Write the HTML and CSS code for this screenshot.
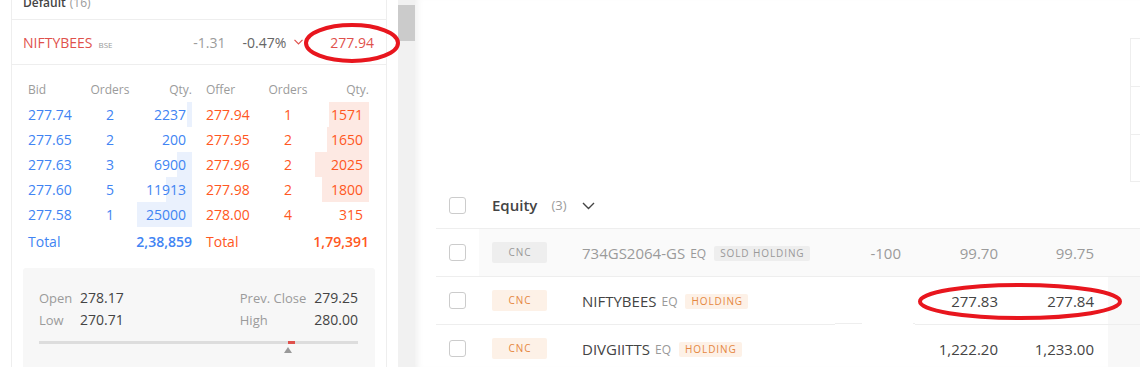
FILE: index.html
```html
<!DOCTYPE html>
<html lang="en">
<head>
<meta charset="utf-8">
<title>Kite</title>
<link rel="stylesheet" href="styles.css">
</head>
<body>
<div class="app">
  <aside class="sidebar">
    <div class="panel">
      <div class="wl-head"><span class="wl-name">Default</span><span class="wl-count">(16)</span></div>
      <div class="inst">
        <span class="inst-name">NIFTYBEES</span><span class="exch">BSE</span>
        <span class="chg">-1.31</span>
        <span class="pct">-0.47%</span>
        <svg class="down" width="9" height="6" viewBox="0 0 9 6"><path d="M0.5 0.8 L4.5 5 L8.5 0.8" fill="none" stroke="#df514c" stroke-width="1.2"/></svg>
        <span class="ltp">277.94</span>
      </div>
      <div class="depth">
        <div class="dh">Bid</div><div class="dh c">Orders</div><div class="dh r">Qty.</div>
        <div class="dh off">Offer</div><div class="dh c">Orders</div><div class="dh r">Qty.</div>

        <div class="b">277.74</div><div class="b c">2</div><div class="b q bq" style="--w:5px">2237</div>
        <div class="a off">277.94</div><div class="a c">1</div><div class="a q aq" style="--w:40px">1571</div>

        <div class="b">277.65</div><div class="b c">2</div><div class="b q bq" style="--w:0px">200</div>
        <div class="a off">277.95</div><div class="a c">2</div><div class="a q aq" style="--w:42px">1650</div>

        <div class="b">277.63</div><div class="b c">3</div><div class="b q bq" style="--w:15px">6900</div>
        <div class="a off">277.96</div><div class="a c">2</div><div class="a q aq" style="--w:54px">2025</div>

        <div class="b">277.60</div><div class="b c">5</div><div class="b q bq" style="--w:26px">11913</div>
        <div class="a off">277.98</div><div class="a c">2</div><div class="a q aq" style="--w:47px">1800</div>

        <div class="b">277.58</div><div class="b c">1</div><div class="b q bq" style="--w:55px">25000</div>
        <div class="a off">278.00</div><div class="a c">4</div><div class="a q aq" style="--w:0px">315</div>

        <div class="b tot">Total</div><div class="b tot"></div><div class="b tot r strong">2,38,859</div>
        <div class="a tot off">Total</div><div class="a tot"></div><div class="a tot r strong">1,79,391</div>
      </div>
      <div class="ohlc">
        <div class="ohlc-grid">
          <div class="og-left">
            <span class="lbl">Open</span><span class="val">278.17</span>
            <span class="lbl">Low</span><span class="val">270.71</span>
          </div>
          <div class="og-right">
            <span class="lbl">Prev. Close</span><span class="val">279.25</span>
            <span class="lbl">High</span><span class="val">280.00</span>
          </div>
        </div>
        <div class="range"><div class="range-mark" style="--p:249px"></div></div>
        <div class="range-ptr" style="--p:245px"></div>
      </div>
    </div>
  </aside>

  <div class="scrollbar"><div class="thumb"></div></div>

  <main class="main">
    <div class="top">
      <div class="edge-table">
        <div class="edge-row"></div>
        <div class="edge-row"></div>
        <div class="edge-row last"></div>
      </div>
    </div>

    <div class="group-head">
      <div class="cell cb-cell"><span class="cb"></span></div>
      <div class="g-title">Equity</div>
      <div class="g-count">(3)</div>
      <svg class="g-chev" width="13" height="8" viewBox="0 0 13 8"><path d="M1 1 L6.5 6.5 L12 1" fill="none" stroke="#444" stroke-width="1.4"/></svg>
    </div>

    <div class="row sold">
      <div class="cell cb-cell"><span class="cb"></span></div>
      <div class="cell prod"><span class="tag tag-gray">CNC</span></div>
      <div class="cell instr"><span class="sym">734GS2064-GS</span><span class="seg">EQ</span><span class="badge badge-gray">SOLD HOLDING</span></div>
      <div class="cell num qty">-100</div>
      <div class="cell num avg">99.70</div>
      <div class="cell num ltpc">99.75</div>
      <div class="cell tail"></div>
    </div>

    <div class="row">
      <div class="cell cb-cell"><span class="cb"></span></div>
      <div class="cell prod"><span class="tag tag-orange">CNC</span></div>
      <div class="cell instr"><span class="sym">NIFTYBEES</span><span class="seg">EQ</span><span class="badge badge-orange">HOLDING</span></div>
      <div class="cell num qty cut"></div>
      <div class="cell num avg">277.83</div>
      <div class="cell num ltpc">277.84</div>
      <div class="cell tail"></div>
    </div>

    <div class="row">
      <div class="cell cb-cell"><span class="cb"></span></div>
      <div class="cell prod"><span class="tag tag-orange">CNC</span></div>
      <div class="cell instr"><span class="sym">DIVGIITTS</span><span class="seg">EQ</span><span class="badge badge-orange">HOLDING</span></div>
      <div class="cell num qty"></div>
      <div class="cell num avg">1,222.20</div>
      <div class="cell num ltpc">1,233.00</div>
      <div class="cell tail"></div>
    </div>
  </main>

  <svg class="annot" width="1140" height="367" viewBox="0 0 1140 367">
    <ellipse cx="352" cy="43" rx="46" ry="18" fill="none" stroke="#e8161e" stroke-width="4"/>
    <ellipse cx="1020" cy="301.5" rx="100" ry="16.5" fill="none" stroke="#e8161e" stroke-width="4"/>
  </svg>
</div>
</body>
</html>
```

FILE: styles.css
```css
* { box-sizing: border-box; }
html, body { margin: 0; padding: 0; }
body {
  font-family: "Open Sans", "Noto Sans", "Liberation Sans", sans-serif;
  color: #444;
  background: #fff;
  width: 1140px;
  height: 367px;
  overflow: hidden;
}
.app {
  position: relative;
  display: flex;
  width: 1140px;
  height: 367px;
  overflow: hidden;
}

/* ---------- sidebar ---------- */
.sidebar {
  width: 398px;
  flex: none;
  background: #fff;
}
.panel {
  margin-left: 11px;
  width: 376px;
  margin-top: -16px;
  border-left: 1px solid #eee;
  border-right: 1px solid #eee;
  height: 420px;
}
.wl-head {
  height: 36px;
  line-height: 18px;
  padding-top: 10px;
  border-bottom: 1px solid #eee;
  padding-left: 11px;
  font-size: 12px;
}
.wl-name { font-weight: 600; color: #444; }
.wl-count { color: #9b9b9b; margin-left: 4px; }

.inst {
  height: 45px;
  border-bottom: 1px solid #eee;
  display: flex;
  align-items: center;
  padding: 1px 12px 0 11px;
  font-size: 14px;
}
.inst-name { color: #df514c; }
.exch {
  font-size: 8px;
  color: #999;
  margin-left: 6px;
  margin-top: 3px;
}
.chg { margin-left: auto; color: #9b9b9b; }
.pct { margin-left: 17px; color: #666; }
.down { margin-left: 8px; margin-top: -1px; }
.ltp { margin-left: 27px; color: #df514c; }

.depth {
  display: grid;
  grid-template-columns: 62px 40px 62px 76px 40px 61px;
  grid-template-rows: repeat(6, 25px) 30px;
  margin: 12px 0 0 16px;
  font-size: 14px;
  line-height: 25px;
}
.depth .dh { font-size: 12px; color: #9b9b9b; }
.depth .c { text-align: center; }
.depth .r { text-align: right; }
.depth .off { padding-left: 14px; }
.depth .b { color: #4184f3; }
.depth .a { color: #ff5722; }
.depth .q {
  text-align: right;
  padding-right: 6px;
  background-repeat: no-repeat;
  background-position: right top;
  background-size: var(--w) 100%;
}
.depth .bq { background-image: linear-gradient(#eaf1fd, #eaf1fd); }
.depth .aq { background-image: linear-gradient(#fde9e3, #fde9e3); }
.depth .tot { line-height: 30px; }
.depth .strong { font-weight: 600; }

.ohlc {
  margin: 11px 0 0 11px;
  width: 352px;
  background: #f7f7f7;
  border-radius: 3px;
  padding: 19px 17px 40px 16px;
}
.ohlc-grid {
  display: flex;
  justify-content: space-between;
  line-height: 22px;
}
.og-left, .og-right {
  display: grid;
  grid-template-columns: auto auto;
  column-gap: 8px;
}
.og-left { grid-template-columns: 33px auto; }
.lbl { font-size: 13px; color: #9b9b9b; }
.val { font-size: 14px; color: #444; text-align: right; }
.og-left .val { text-align: left; }
.range {
  margin-top: 10px;
  height: 3px;
  background: #ddd;
  display: flex;
}
.range-mark {
  margin-left: var(--p);
  width: 7px;
  height: 3px;
  background: #df514c;
}
.range-ptr {
  margin-top: 3px;
  margin-left: var(--p);
  width: 0;
  height: 0;
  border-left: 4px solid transparent;
  border-right: 4px solid transparent;
  border-bottom: 6px solid #999;
}

/* ---------- scrollbar ---------- */
.scrollbar {
  width: 17px;
  flex: none;
  background: #f1f1f1;
}
.thumb {
  margin-top: 5px;
  height: 36px;
  background: #cbcbcb;
}

/* ---------- main ---------- */
.main {
  flex: 1;
  padding-left: 21px;
  box-shadow: inset 7px 0 7px -5px rgba(0, 0, 0, 0.07);
}
.top {
  height: 182px;
  display: flex;
  justify-content: flex-end;
}
.edge-table {
  width: 10px;
  margin-top: 38px;
  border-left: 1px solid #eee;
  height: 144px;
}
.edge-row {
  height: 48px;
  border-top: 1px solid #eee;
}
.edge-row.last { border-bottom: 1px solid #eee; }

.group-head {
  height: 47px;
  display: flex;
  align-items: center;
  border-bottom: 1px solid #eee;
}
.group-head .cb-cell { border: 0; height: auto; }
.g-title {
  margin-left: 13px;
  font-size: 15px;
  font-weight: 600;
  color: #444;
}
.g-count {
  margin-left: 14px;
  font-size: 13px;
  color: #9b9b9b;
}
.g-chev { margin-left: 15px; margin-top: 1px; }

.cb {
  display: block;
  width: 17px;
  height: 17px;
  border: 1px solid #ccc;
  border-radius: 3px;
  background: #fff;
}

.row {
  display: flex;
  height: 48px;
}
.cell {
  height: 48px;
  border-bottom: 1px solid #eee;
  display: flex;
  align-items: center;
  flex: none;
}
.cb-cell { width: 43px; padding-left: 13px; }
.prod { width: 103px; padding-left: 13px; }
.instr { width: 253px; }
.num {
  justify-content: flex-end;
  padding-right: 14px;
  font-size: 15px;
  color: #444;
}
.qty { width: 80px; }
.avg { width: 97px; }
.ltpc { width: 96px; }
.tail { flex: 1; background: #f8f8f8; }

.row.sold .cell:not(.cb-cell) { background: #fafafa; }
.row.sold .num, .row.sold .sym { color: #9b9b9b; }

.cut {
  border-bottom-color: transparent;
  background:
    linear-gradient(#eee, #eee) left bottom / 27px 1px no-repeat,
    linear-gradient(#eee, #eee) right bottom / 2px 1px no-repeat;
}

.tag {
  display: block;
  width: 55px;
  height: 21px;
  line-height: 21px;
  text-align: center;
  font-size: 10px;
  letter-spacing: 1px;
  padding-left: 1px;
  border-radius: 2px;
}
.tag-gray { background: #eee; color: #999; }
.tag-orange { background: #fdf1e7; color: #e5873f; }

.sym { font-size: 15px; color: #444; }
.seg { font-size: 12px; color: #999; margin-left: 5px; margin-top: 2px; }
.badge {
  margin-left: 8px;
  height: 15px;
  line-height: 15px;
  padding: 0 5px 0 6px;
  font-size: 10px;
  letter-spacing: 0.9px;
  border-radius: 2px;
  margin-top: 2px;
}
.badge-gray { background: #eee; color: #999; }
.badge-orange { background: #fdf1e7; color: #e5873f; }

/* ---------- annotation overlay ---------- */
.annot {
  position: absolute;
  left: 0;
  top: 0;
  pointer-events: none;
}
```
